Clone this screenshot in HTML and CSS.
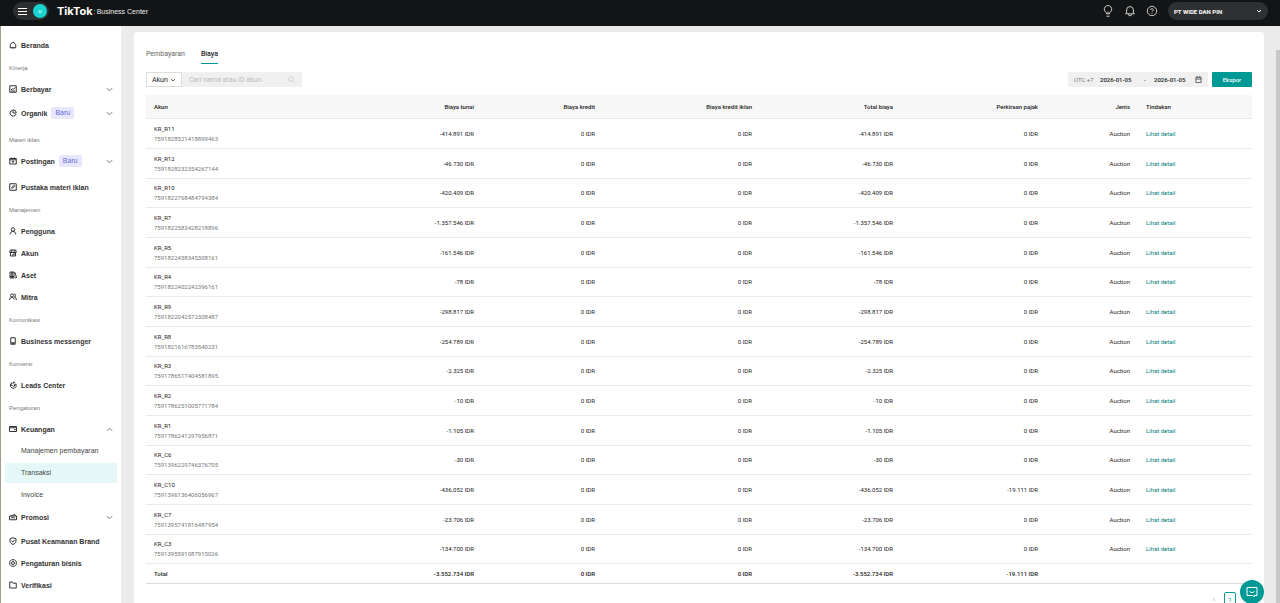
FILE: index.html
```
<!DOCTYPE html>
<html lang="id">
<head>
    <meta charset="UTF-8">
    <meta name="viewport" content="width=device-width, initial-scale=1.0">
    <title>TikTok Business Center</title>
    <link rel="stylesheet" href="styles.css">
</head>
<body>
    <header class="topbar">
        <div class="menu-pill">
            <button class="icon-btn" aria-label="Menu"><svg width="9" height="9" viewBox="0 0 9 9"><path d="M0 1.5h9M0 4.5h9M0 7.5h9"/></svg></button>
            <span class="avatar">u</span>
        </div>
        <a class="brand" href="#"><b>TikTok</b><span class="colon"><i></i><i></i></span><span class="brand-sub">Business Center</span></a>
        <div class="top-actions">
            <button class="icon-btn" aria-label="Tips"><svg width="12" height="12" viewBox="0 0 12 12"><path d="M4.4 8.800V7.600A3.700 3.700 0 1 1 7.600 7.600v1.200zM4.500 11.200h3M6 8.600V6.600"/></svg></button>
            <button class="icon-btn" aria-label="Notifikasi"><svg width="12" height="12" viewBox="0 0 12 12"><path d="M2.6 8.6V5a3.4 3.4 0 0 1 6.8 0v3.6M1.2 8.8h9.6M4.4 9.2a1.6 1.6 0 0 0 3.2 0"/></svg></button>
            <button class="icon-btn" aria-label="Bantuan"><svg width="12" height="12" viewBox="0 0 12 12"><circle cx="6" cy="6" r="4.7"/><path d="M4.7 5a1.3 1.3 0 1 1 1.9 1.1Q6 6.4 6 7.1M6 8v.9"/></svg></button>
            <button class="account"><span>PT WIDE DAN PIN</span><svg width="6" height="6" viewBox="0 0 6 6"><path d="M1 2l2 2 2-2"/></svg></button>
        </div>
    </header>

    <div class="layout">
        <nav class="sidebar">
            <a class="item" href="#"><svg class="ico" viewBox="0 0 16 16"><path d="M2.5 13.5V7L8 2l5.5 5v6.5zM5 13.5h6"/></svg>Beranda</a>

            <h2>Kinerja</h2>
            <a class="item more" href="#"><svg class="ico" viewBox="0 0 16 16"><path d="M1.500 1.500h13v13h-13zM4 9.500l3-2 2 1 4-4M4 12h8"/></svg>Berbayar<svg class="chev" viewBox="0 0 8 8"><path d="M1 2.5l3 3 3-3"/></svg></a>
            <a class="item more new" href="#"><svg class="ico" viewBox="0 0 16 16"><path d="M6.500 2.500a6 6 0 1 0 7.500 7.500M8 1.500V8h6.500A6.500 6.500 0 0 0 8 1.500z"/></svg>Organik<span class="badge">Baru</span><svg class="chev" viewBox="0 0 8 8"><path d="M1 2.5l3 3 3-3"/></svg></a>

            <h2>Materi iklan</h2>
            <a class="item more new" href="#"><svg class="ico" viewBox="0 0 16 16"><path d="M1.500 3h13v11h-13zM1.500 5.500h13M5 1v3M11 1v3M8 7.500v4.500M6 9.500l2-2 2 2"/></svg>Postingan<span class="badge">Baru</span><svg class="chev" viewBox="0 0 8 8"><path d="M1 2.5l3 3 3-3"/></svg></a>
            <a class="item" href="#"><svg class="ico" viewBox="0 0 16 16"><path d="M1.500 1.500h13v13h-13zM5.500 11c0-3 2-5 5.500-6-.500 3-2 5-4.500 5"/></svg>Pustaka materi iklan</a>

            <h2>Manajemen</h2>
            <a class="item" href="#"><svg class="ico" viewBox="0 0 16 16"><circle cx="8" cy="5" r="3.5"/><path d="M2.500 15c0-4 2-6 5.500-6s5.500 2 5.500 6"/></svg>Pengguna</a>
            <a class="item" href="#"><svg class="ico" viewBox="0 0 16 16"><path d="M2.500 2h11l1 5h-13zM3 7v7h10V7M5.500 2v5M10.500 2v5M8 14v-4h5"/></svg>Akun</a>
            <a class="item" href="#"><svg class="ico" viewBox="0 0 16 16"><path d="M2 2h4v12H2zM6 2h4v12H6zM10 4l2-1 3 10-3 1M2 11h8"/></svg>Aset</a>
            <a class="item" href="#"><svg class="ico" viewBox="0 0 16 16"><circle cx="6" cy="5" r="3"/><path d="M1 14c0-3 2-5 5-5M9.500 2a3 3 0 0 1 1 6c3 0 4 3 4 6M6 9c3 0 4 2 4 4"/></svg>Mitra</a>

            <h2>Komunikasi</h2>
            <a class="item" href="#"><svg class="ico" viewBox="0 0 16 16"><path d="M3.5 1.5h9v10h-9zM3.5 11.5v3h9v-3M6 13h4"/></svg>Business messenger</a>

            <h2>Konversi</h2>
            <a class="item" href="#"><svg class="ico" viewBox="0 0 16 16"><path d="M5 2.500L3.500 8 7 9M3 6a6 6 0 0 0 11 5V6l-3 1v3a3 3 0 0 1-4-1M8 6l1-4 3 1"/></svg>Leads Center</a>

            <h2>Pengaturan</h2>
            <a class="item more" href="#"><svg class="ico" viewBox="0 0 16 16"><path d="M1 3h14v10H1zM1 5.500h14M10 9h3"/></svg>Keuangan<svg class="chev" viewBox="0 0 8 8"><path d="M1 5.5l3-3 3 3"/></svg></a>
            <div class="submenu">
                <a href="#">Manajemen pembayaran</a>
                <a href="#" class="active">Transaksi</a>
                <a href="#">Invoice</a>
            </div>
            <a class="item more" href="#"><svg class="ico" viewBox="0 0 16 16"><path d="M1 6h14v7.500H1zM3 6l9-3 1 3M4 9.500h8"/></svg>Promosi<svg class="chev" viewBox="0 0 8 8"><path d="M1 2.5l3 3 3-3"/></svg></a>
            <a class="item" href="#"><svg class="ico" viewBox="0 0 16 16"><path d="M8 1.5l6 2v5c0 3-3 5-6 6.500-3-1.500-6-3.500-6-6.500v-5zM5 8l2.500 2L11 6"/></svg>Pusat Keamanan Brand</a>
            <a class="item" href="#"><svg class="ico" viewBox="0 0 16 16"><path d="M5 1.500h6L14.500 5v6L11 14.500H5L1.500 11V5z"/><circle cx="8" cy="8" r="3"/></svg>Pengaturan bisnis</a>
            <a class="item" href="#"><svg class="ico" viewBox="0 0 16 16"><path d="M1.5 2h5l2 2.500h6V14h-13z"/></svg>Verifikasi</a>
            <a class="item" href="#" aria-label="Lainnya"><svg class="ico" viewBox="0 0 16 16"><path d="M4 1.5h6l3 3v10H4z"/></svg></a>
        </nav>

        <main class="content">
            <section class="card">
                <div class="tabs">
                    <a href="#">Pembayaran</a>
                    <a href="#" class="active">Biaya</a>
                </div>

                <div class="toolbar">
                    <div class="select-box">
                        <select aria-label="Cari berdasarkan"><option>Akun</option></select>
                        <svg width="6" height="6" viewBox="0 0 6 6"><path d="M1 2l2 2 2-2"/></svg>
                    </div>
                    <div class="search">
                        <input type="text" placeholder="Cari nama atau ID akun" aria-label="Cari nama atau ID akun">
                        <svg width="7" height="7" viewBox="0 0 8 8"><circle cx="3.5" cy="3.5" r="2.7"/><path d="M5.5 5.5l2 2"/></svg>
                    </div>
                    <div class="dates">
                        <span class="utc">UTC +7</span>
                        <input type="text" value="2026-01-05" aria-label="Tanggal mulai">
                        <span class="dash">-</span>
                        <input type="text" value="2026-01-05" aria-label="Tanggal akhir">
                        <svg width="7" height="7" viewBox="0 0 8 8"><path d="M1 1.5h6v6H1zM1 3.5h6M2.5 0v2M5.5 0v2"/></svg>
                    </div>
                    <button class="export">Ekspor</button>
                </div>

                <table class="costs">
                    <colgroup>
                        <col><col class="c-cash"><col class="c-credit"><col class="c-adcredit"><col class="c-total"><col class="c-tax"><col class="c-type"><col class="c-action">
                    </colgroup>
                    <thead>
                        <tr><th>Akun</th><th>Biaya tunai</th><th>Biaya kredit</th><th>Biaya kredit iklan</th><th>Total biaya</th><th>Perkiraan pajak</th><th>Jenis</th><th>Tindakan</th></tr>
                    </thead>
                    <tbody>
                        <tr><td>KR_R11<small>7591828521418899463</small></td><td>-414.891 IDR</td><td>0 IDR</td><td>0 IDR</td><td>-414.891 IDR</td><td>0 IDR</td><td>Auction</td><td><a href="#">Lihat detail</a></td></tr>
                        <tr><td>KR_R12<small>7591828232354267144</small></td><td>-46.730 IDR</td><td>0 IDR</td><td>0 IDR</td><td>-46.730 IDR</td><td>0 IDR</td><td>Auction</td><td><a href="#">Lihat detail</a></td></tr>
                        <tr><td>KR_R10<small>7591822768484794384</small></td><td>-420.409 IDR</td><td>0 IDR</td><td>0 IDR</td><td>-420.409 IDR</td><td>0 IDR</td><td>Auction</td><td><a href="#">Lihat detail</a></td></tr>
                        <tr><td>KR_R7<small>7591822583428218896</small></td><td>-1.357.546 IDR</td><td>0 IDR</td><td>0 IDR</td><td>-1.357.546 IDR</td><td>0 IDR</td><td>Auction</td><td><a href="#">Lihat detail</a></td></tr>
                        <tr><td>KR_R5<small>7591822458345308161</small></td><td>-161.546 IDR</td><td>0 IDR</td><td>0 IDR</td><td>-161.546 IDR</td><td>0 IDR</td><td>Auction</td><td><a href="#">Lihat detail</a></td></tr>
                        <tr><td>KR_R4<small>7591822402242396161</small></td><td>-78 IDR</td><td>0 IDR</td><td>0 IDR</td><td>-78 IDR</td><td>0 IDR</td><td>Auction</td><td><a href="#">Lihat detail</a></td></tr>
                        <tr><td>KR_R9<small>7591822042572308487</small></td><td>-298.817 IDR</td><td>0 IDR</td><td>0 IDR</td><td>-298.817 IDR</td><td>0 IDR</td><td>Auction</td><td><a href="#">Lihat detail</a></td></tr>
                        <tr><td>KR_R8<small>7591821616783540231</small></td><td>-254.789 IDR</td><td>0 IDR</td><td>0 IDR</td><td>-254.789 IDR</td><td>0 IDR</td><td>Auction</td><td><a href="#">Lihat detail</a></td></tr>
                        <tr><td>KR_R3<small>7591786517404581895</small></td><td>-2.325 IDR</td><td>0 IDR</td><td>0 IDR</td><td>-2.325 IDR</td><td>0 IDR</td><td>Auction</td><td><a href="#">Lihat detail</a></td></tr>
                        <tr><td>KR_R2<small>7591786251005771784</small></td><td>-10 IDR</td><td>0 IDR</td><td>0 IDR</td><td>-10 IDR</td><td>0 IDR</td><td>Auction</td><td><a href="#">Lihat detail</a></td></tr>
                        <tr><td>KR_R1<small>7591786241297956871</small></td><td>-1.105 IDR</td><td>0 IDR</td><td>0 IDR</td><td>-1.105 IDR</td><td>0 IDR</td><td>Auction</td><td><a href="#">Lihat detail</a></td></tr>
                        <tr><td>KR_C6<small>7591396229746376705</small></td><td>-30 IDR</td><td>0 IDR</td><td>0 IDR</td><td>-30 IDR</td><td>0 IDR</td><td>Auction</td><td><a href="#">Lihat detail</a></td></tr>
                        <tr><td>KR_C10<small>7591396136406056967</small></td><td>-436.052 IDR</td><td>0 IDR</td><td>0 IDR</td><td>-436.052 IDR</td><td>-19.111 IDR</td><td>Auction</td><td><a href="#">Lihat detail</a></td></tr>
                        <tr><td>KR_C7<small>7591395741816487954</small></td><td>-23.706 IDR</td><td>0 IDR</td><td>0 IDR</td><td>-23.706 IDR</td><td>0 IDR</td><td>Auction</td><td><a href="#">Lihat detail</a></td></tr>
                        <tr><td>KR_C3<small>7591395591087915026</small></td><td>-134.700 IDR</td><td>0 IDR</td><td>0 IDR</td><td>-134.700 IDR</td><td>0 IDR</td><td>Auction</td><td><a href="#">Lihat detail</a></td></tr>
                    </tbody>
                    <tfoot>
                        <tr><td>Total</td><td>-3.552.734 IDR</td><td>0 IDR</td><td>0 IDR</td><td>-3.552.734 IDR</td><td>-19.111 IDR</td><td></td><td></td></tr>
                    </tfoot>
                </table>

                <div class="pager">
                    <button class="prev" aria-label="Sebelumnya">‹</button>
                    <button class="page">1</button>
                </div>
            </section>
        </main>
    </div>

    <div class="scroll-thumb"></div>
    <button class="chat" aria-label="Bantuan obrolan"><svg width="12" height="12" viewBox="0 0 12 12"><path d="M1 1.5h10v8H8.5V11L7 9.5H1zM3.5 5.5Q6 8 8.5 5.5"/></svg></button>
</body>
</html>
```
FILE: styles.css
```
*{
    margin: 0;
    padding: 0;
    box-sizing: border-box;
}
body{
    height: 100vh;
    display: flex;
    flex-direction: column;
    overflow: hidden;
    background-color: #ebebeb;
    font-family: Roboto, "Liberation Sans", sans-serif;
    font-size: 6px;
    color: #222;
}
a{color: inherit; text-decoration: none;}
button, input, select{font: inherit; color: inherit; border: none; background: none;}
button{cursor: pointer;}
svg{fill: none; stroke: currentColor; flex: none;}

/* top bar */
.topbar{
    height: 26px;
    flex: none;
    display: flex;
    align-items: center;
    padding: 0 12px 4px 13px;
    background-color: #121415;
    color: #fff;
}
.icon-btn{display: flex;}
.menu-pill{
    display: flex;
    align-items: center;
    gap: 6px;
    height: 18px;
    padding: 0 2px 0 5px;
    border-radius: 9px;
    background-color: #2b2d2e;
}
.avatar{
    width: 14px;
    height: 14px;
    border-radius: 50%;
    background-color: #16d5d0;
    text-align: center;
    line-height: 14px;
}
.brand{
    display: flex;
    align-items: center;
    margin-left: 8px;
    font-family: Inter, sans-serif;
    font-size: 11px;
}
.brand-sub{font-family: "Liberation Sans", sans-serif; font-size: 7px; color: #eee;}
.colon{display: flex; flex-direction: column; gap: 2px; margin: 2px 2px 0 1px;}
.colon i{width: 1px; height: 1px; background-color: #25d5d0;}
.colon i:last-child{background-color: #e8384f;}
.top-actions{
    display: flex;
    align-items: center;
    gap: 10px;
    margin-left: auto;
    color: #ccc;
}
.account{
    display: flex;
    align-items: center;
    justify-content: space-between;
    width: 100px;
    height: 18px;
    padding: 0 6px;
    border-radius: 9px;
    background-color: #2f3031;
    color: #fff;
    font-weight: bold;
}

.layout{flex: 1; min-height: 0; display: flex;}

/* sidebar */
.sidebar{
    width: 121px;
    flex: none;
    padding-top: 8px;
    overflow: hidden;
    border-left: 1px solid #a39a8e;
    background-color: #fff;
    font-family: "Liberation Sans", sans-serif;
    font-size: 7px;
}
.sidebar h2{
    height: 22px;
    padding: 2px 8px 0;
    line-height: 20px;
    font-size: 6px;
    font-weight: normal;
    color: #777;
}
.item{
    display: flex;
    align-items: center;
    height: 22px;
    padding: 0 8px;
    font-weight: bold;
    color: #333;
}
.ico{width: 8px; height: 8px; margin-right: 4px; stroke-width: 2;}
.chev{width: 7px; height: 7px; margin-left: auto; color: #666;}
.more{margin-bottom: 2px;}
.new{margin-bottom: 4px;}
.more:has(+ .submenu){margin-bottom: 0;}
.badge{
    margin-left: 4px;
    padding: 0 4px;
    line-height: 12px;
    border-radius: 2px;
    background-color: #e6e6fd;
    color: #6a68d8;
    font-weight: normal;
}
.submenu{
    display: flex;
    flex-direction: column;
    gap: 2px;
    padding: 1px 4px;
}
.submenu a{
    height: 20px;
    padding-left: 16px;
    line-height: 20px;
    color: #444;
}
.submenu .active{background-color: #e4f9f7; border-radius: 1px;}

/* content */
.content{flex: 1; min-width: 0; padding: 6px 16px 0 13px;}
.card{
    min-height: 100%;
    padding: 16px 12px;
    border-radius: 3px;
    background-color: #fff;
}
.tabs{display: flex; gap: 16px; font-size: 7px; color: #666;}
.tabs a{line-height: 13px; padding-bottom: 2px; border-bottom: 1px solid transparent;}
.tabs .active{color: #222; font-weight: 500; border-color: #009995;}

.toolbar{display: flex; height: 15px; margin: 8px 0;}
.select-box{
    display: flex;
    position: relative;
    width: 36px;
    border: 1px solid #ddd;
    font-size: 7px;
}
.select-box select{width: 100%; padding-left: 5px; appearance: none;}
.select-box svg{position: absolute; right: 5px; top: 4px; color: #666; pointer-events: none;}
.search{
    display: flex;
    align-items: center;
    width: 120px;
    padding: 0 7px;
    background-color: #f0f0f0;
    color: #ccc;
    font-size: 7px;
}
.search input{flex: 1; min-width: 0;}
.search input::placeholder{color: #bbb;}
.dates{
    display: flex;
    align-items: center;
    width: 140px;
    margin-left: auto;
    padding: 0 6px;
    border-radius: 1px;
    background-color: #f0f0f0;
}
.dates input{width: 36px; font-weight: 500;}
.utc{width: 26px; color: #777;}
.dash{width: 18px; padding-left: 8px;}
.dates svg{margin-left: auto; color: #555;}
.export{
    width: 40px;
    margin-left: 4px;
    border-radius: 1px;
    background-color: #009995;
    color: #fff;
    font-weight: 500;
}

.costs{width: 100%; table-layout: fixed; border-collapse: separate; border-spacing: 0;}
.c-cash{width: 106px;}
.c-credit{width: 121px;}
.c-adcredit{width: 157px;}
.c-total{width: 141px;}
.c-tax{width: 145px;}
.c-type{width: 92px;}
.c-action{width: 114px;}
.costs th, .costs td{
    padding: 0 8px;
    border-bottom: 1px solid #e9e9e9;
    line-height: 10px;
    text-align: right;
    vertical-align: middle;
}
.costs th{height: 24px; background-color: #f7f7f7; font-weight: 500;}
.costs td{height: 30px;}
.costs tr:nth-child(3n) td{height: 29px;}
.costs th:first-child, .costs td:first-child,
.costs th:last-child, .costs td:last-child{text-align: left;}
.costs small{display: block; font-size: 6px; color: #777;}
.costs td a{color: #00807c;}
.costs tfoot td{height: 20px; font-weight: 500; border-color: #ddd;}

.pager{display: flex; justify-content: flex-end; gap: 4px; margin: 8px 16px 0 0;}
.pager button{width: 12px; height: 14px;}
.pager .prev{color: #aaa; font-size: 8px;}
.pager .page{border: 1px solid #009995; border-radius: 2px; color: #009995;}

.scroll-thumb{
    position: absolute;
    top: 50px;
    right: 0;
    bottom: 0;
    width: 4px;
    background-color: #c8c8c8;
}
.chat{
    position: absolute;
    right: 16px;
    bottom: -1px;
    width: 24px;
    height: 24px;
    display: flex;
    align-items: center;
    justify-content: center;
    border-radius: 50%;
    background-color: #009995;
    color: #fff;
}
```
